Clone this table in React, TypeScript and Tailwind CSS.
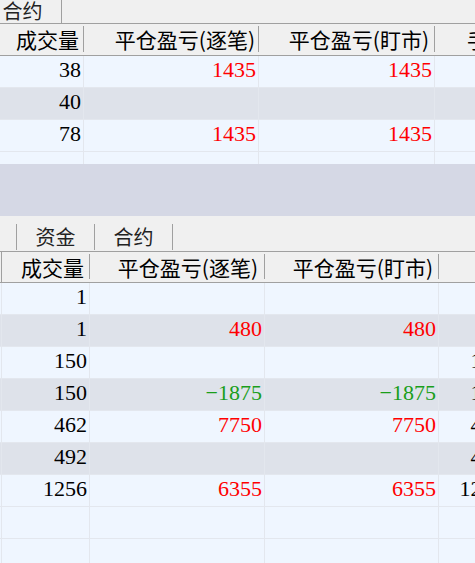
import React from "react";

type Row = { v?: string; a?: string; b?: string; neg?: boolean; c4?: string };

const CJK = { fontFamily: '"Noto Sans CJK SC", "Noto Sans", sans-serif' };
const NUM = { fontFamily: '"Liberation Serif", "DejaVu Serif", serif' };

function HeaderCell({ w, text, pr, sep = true }: { w: number; text: string; pr: number; sep?: boolean }) {
  return (
    <div className="flex shrink-0 items-stretch" style={{ width: w }}>
      <div
        className="flex flex-1 items-center justify-end overflow-hidden whitespace-nowrap text-[21px] leading-none text-black"
        style={{ ...CJK, paddingRight: pr }}
      >
        {text}
      </div>
      {sep && <div className="mt-[2px] mb-[3px] w-px shrink-0 bg-[#a0a0a0]" />}
    </div>
  );
}

function Cell({ w, text, color, pr = 2 }: { w: number; text?: string; color?: string; pr?: number }) {
  return (
    <div
      className={`flex shrink-0 items-center justify-end whitespace-nowrap border-r border-[#e3e7ee] pb-[4px] text-[22px] leading-none ${color ?? "text-black"}`}
      style={{ ...NUM, width: w, paddingRight: pr }}
    >
      {text}
    </div>
  );
}

function DataRow({ r, idx, cols, lead, c4pr }: { r: Row; idx: number; cols: number[]; lead?: boolean; c4pr: number }) {
  const empty = r.v === undefined;
  const gray = !empty && idx % 2 === 1;
  const clr = r.neg ? "text-[#1a9e1a]" : "text-[#ff0000]";
  return (
    <div className={`flex h-[32px] shrink-0 border-b border-[#e3e7ee] ${gray ? "bg-[#dee2ea]" : "bg-[#eff6ff]"}`}>
      {lead && <div className="w-[2px] shrink-0 border-r border-[#e3e7ee]" />}
      <Cell w={cols[0]} text={r.v} />
      <Cell w={cols[1]} text={r.a} color={clr} />
      <Cell w={cols[2]} text={r.b} color={clr} />
      <Cell w={cols[3]} text={r.c4} pr={c4pr} />
    </div>
  );
}

function Tab({ label, w = 78, ml = 0 }: { label: string; w?: number; ml?: number }) {
  return (
    <div
      className="flex h-[26px] shrink-0 items-center justify-center border-r border-[#a0a0a0] text-[20px] leading-none text-[#222]"
      style={{ ...CJK, width: w, marginLeft: ml }}
    >
      {label}
    </div>
  );
}

export default function App() {
  const topCols = [84, 175, 176, 100];
  const botCols = [88, 175, 174, 106];
  const topRows: Row[] = [
    { v: "38", a: "1435", b: "1435" },
    { v: "40" },
    { v: "78", a: "1435", b: "1435" },
    {},
  ];
  const botRows: Row[] = [
    { v: "1", c4: "1.00" },
    { v: "1", a: "480", b: "480", c4: "1.00" },
    { v: "150", c4: "150.00" },
    { v: "150", a: "\u22121875", b: "\u22121875", neg: true, c4: "150.00" },
    { v: "462", a: "7750", b: "7750", c4: "462.00" },
    { v: "492", c4: "492.00" },
    { v: "1256", a: "6355", b: "6355", c4: "1256.00" },
    {},
    {},
  ];

  return (
    <div className="flex h-[563px] w-[475px] flex-col overflow-hidden bg-[#f0f0f0]">
      {/* top panel */}
      <div className="flex h-[164px] shrink-0 flex-col overflow-hidden">
        <div className="flex h-[24px] shrink-0 items-end overflow-hidden border-b border-[#a0a0a0] bg-[#f0f0f0]">
          <div className="mb-[-1px] flex items-end">
            <Tab label="合约" ml={-16} />
          </div>
        </div>
        <div className="flex h-[32px] shrink-0 border-b border-[#a0a0a0] bg-[#f0f0f0]">
          <HeaderCell w={topCols[0]} text="成交量" pr={4} />
          <HeaderCell w={topCols[1]} text="平仓盈亏(逐笔)" pr={3} />
          <HeaderCell w={topCols[2]} text="平仓盈亏(盯市)" pr={5} />
          <HeaderCell w={topCols[3]} text="手续费" pr={4} />
        </div>
        {topRows.map((r, i) => (
          <DataRow key={i} r={r} idx={i} cols={topCols} c4pr={4} />
        ))}
      </div>

      {/* splitter area */}
      <div className="h-[52px] shrink-0 bg-[#d5d8e5]" />

      {/* bottom panel */}
      <div className="flex min-h-0 flex-1 flex-col overflow-hidden">
        <div className="flex h-[36px] shrink-0 items-end overflow-hidden border-b border-[#a0a0a0] bg-[#f0f0f0]">
          <div className="flex items-end pb-[1px]">
            <Tab label="持仓" ml={-61} />
            <Tab label="资金" />
            <Tab label="合约" />
          </div>
        </div>
        <div className="flex h-[31px] shrink-0 border-b border-[#a0a0a0] bg-[#f0f0f0]">
          <div className="flex w-[2px] shrink-0 items-stretch">
            <div className="ml-[1px] w-px bg-[#a0a0a0]" />
          </div>
          <HeaderCell w={botCols[0]} text="成交量" pr={5} />
          <HeaderCell w={botCols[1]} text="平仓盈亏(逐笔)" pr={6} />
          <HeaderCell w={botCols[2]} text="平仓盈亏(盯市)" pr={5} />
          <HeaderCell w={botCols[3]} text="手续费" pr={5} />
        </div>
        {botRows.map((r, i) => (
          <DataRow key={i} r={r} idx={i} cols={botCols} lead c4pr={13} />
        ))}
      </div>
    </div>
  );
}
